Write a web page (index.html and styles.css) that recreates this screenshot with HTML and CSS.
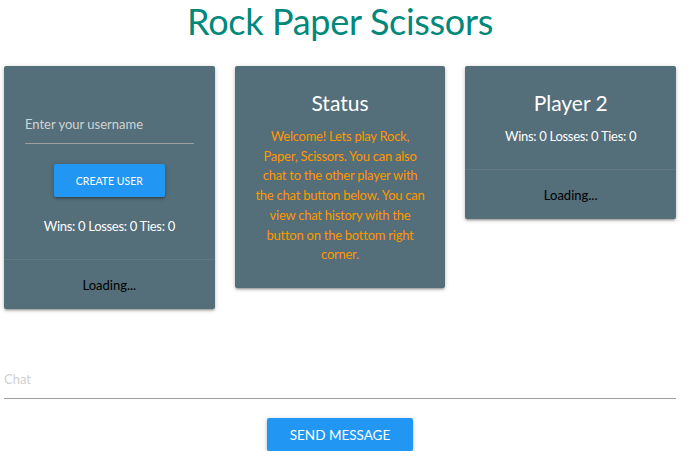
FILE: index.html
```html
<!DOCTYPE html>
<html lang="en">
<head>
<meta charset="utf-8">
<title>Rock Paper Scissors</title>
<link rel="stylesheet" href="styles.css">
</head>
<body>
<div class="page">
  <h1 class="title">Rock Paper Scissors</h1>
  <div class="cards">
    <div class="card card-user">
      <div class="card-content">
        <div class="field">
          <input class="text-input" type="text" placeholder="Enter your username">
        </div>
        <div class="btn-row">
          <button class="btn btn-small">CREATE USER</button>
        </div>
        <p class="stats">Wins: 0 Losses: 0 Ties: 0</p>
      </div>
      <div class="card-action">Loading...</div>
    </div>
    <div class="card">
      <div class="card-content">
        <h2 class="card-title">Status</h2>
        <p class="status-text">Welcome! Lets play Rock, Paper, Scissors. You can also chat to the other player with the chat button below. You can view chat history with the button on the bottom right corner.</p>
      </div>
    </div>
    <div class="card">
      <div class="card-content">
        <h2 class="card-title">Player 2</h2>
        <p class="stats">Wins: 0 Losses: 0 Ties: 0</p>
      </div>
      <div class="card-action">Loading...</div>
    </div>
  </div>
  <div class="chat">
    <input class="chat-input" type="text" placeholder="Chat">
  </div>
  <div class="send-row">
    <button class="btn btn-send">SEND MESSAGE</button>
  </div>
</div>
</body>
</html>
```
FILE: styles.css
```css
* { box-sizing: border-box; }
html, body { margin: 0; padding: 0; background: #fff; }
body {
  font-family: "Lato", "Open Sans", sans-serif;
  color: rgba(0,0,0,0.87);
}
.page {
  width: 672px;
  margin-left: 4px;
}
.title {
  margin: 0;
  height: 66px;
  text-align: center;
  font-weight: 400;
  font-size: 36px;
  letter-spacing: -0.3px;
  line-height: 42px;
  color: #00897b;
}
.cards {
  display: grid;
  grid-template-columns: repeat(3, 1fr);
  column-gap: 20px;
  align-items: start;
}
.card {
  background: #546e7a;
  border-radius: 2px;
  box-shadow: 0 2px 2px 0 rgba(0,0,0,0.14), 0 3px 1px -2px rgba(0,0,0,0.12), 0 1px 5px 0 rgba(0,0,0,0.2);
  text-align: center;
}
.card-content {
  padding: 24px 21px 23px;
}
.card-title {
  margin: 0;
  font-size: 21px;
  line-height: 26px;
  font-weight: 400;
  color: #fff;
}
.status-text {
  margin: 11px -2px 0;
  font-size: 13px;
  letter-spacing: -0.25px;
  line-height: 19.7px;
  color: #ff9800;
}
.stats {
  margin: 10px 0 0;
  font-size: 13px;
  letter-spacing: -0.3px;
  line-height: 20px;
  color: #fff;
}
.card-user .stats { margin-top: 19px; }
.field { padding-top: 15px; }
.text-input, .chat-input {
  display: block;
  width: 100%;
  height: 39px;
  border: none;
  border-bottom: 1px solid #9e9e9e;
  background: transparent;
  outline: none;
  padding: 0;
  font-family: inherit;
  font-size: 13px;
}
.text-input::placeholder { color: #cfd4d6; }
.btn-row { display: flex; justify-content: center; margin-top: 20px; }
.btn {
  border: none;
  border-radius: 2px;
  background: #2196f3;
  color: #fff;
  font-family: inherit;
  height: 33px;
  box-shadow: 0 2px 2px 0 rgba(0,0,0,0.14), 0 3px 1px -2px rgba(0,0,0,0.12), 0 1px 5px 0 rgba(0,0,0,0.2);
  padding: 0;
}
.btn-small { width: 111px; font-size: 10.5px; }
.card-action {
  border-top: 1px solid rgba(160,160,160,0.2);
  height: 50px;
  display: flex;
  align-items: center;
  justify-content: center;
  font-size: 13px;
  color: #000;
}
.chat { margin-top: 51px; }
.chat-input::placeholder { color: #d0d0d0; }
.send-row { display: flex; justify-content: center; margin-top: 19px; }
.btn-send { width: 146px; font-size: 13.5px; }
```
